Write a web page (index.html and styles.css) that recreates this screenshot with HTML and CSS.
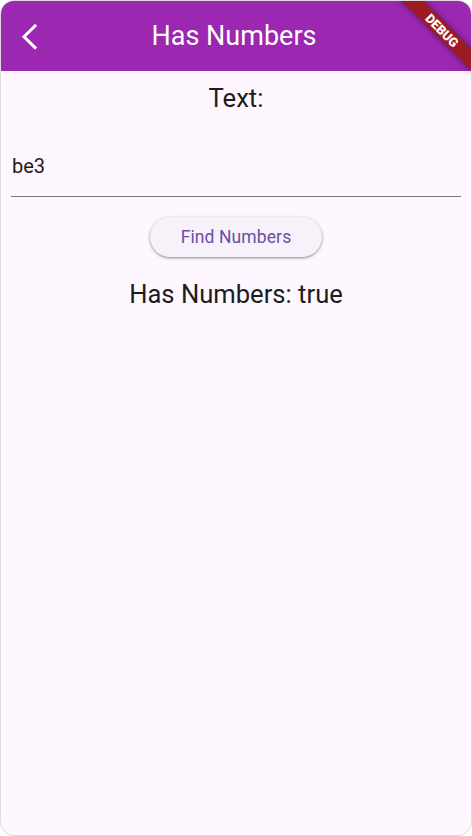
FILE: index.html
```html
<!DOCTYPE html>
<html lang="en">
<head>
<meta charset="utf-8">
<title>Has Numbers</title>
<link rel="stylesheet" href="styles.css">
</head>
<body>
<div class="device">
  <header class="appbar">
    <button class="back" aria-label="Back">
      <svg width="20" height="26" viewBox="0 0 20 26"><polyline points="15,2 4,12.8 15,23.6" fill="none" stroke="#fff" stroke-width="3" stroke-linecap="square" stroke-linejoin="miter"/></svg>
    </button>
    <h1 class="title">Has Numbers</h1>
    <span class="spacer"></span>
  </header>
  <main class="content">
    <div class="label">Text:</div>
    <div class="field"><span class="field-value">be3</span></div>
    <button class="find-btn">Find Numbers</button>
    <div class="result">Has Numbers: true</div>
  </main>
  <div class="debug-banner">DEBUG</div>
</div>
</body>
</html>
```
FILE: styles.css
```css
html, body {
  margin: 0;
  padding: 0;
  background: #ffffff;
}

.device {
  position: relative;
  width: 472px;
  height: 836px;
  box-sizing: border-box;
  border: 1px solid #dcdcdc;
  border-radius: 14px;
  overflow: hidden;
  background: #fef7ff;
  font-family: Roboto, "Noto Sans", sans-serif;
  color: #1d1b20;
  display: flex;
  flex-direction: column;
}

.appbar {
  height: 70px;
  flex: none;
  background: #9c27b0;
  display: grid;
  grid-template-columns: 70px 1fr 70px;
  align-items: center;
}

.back {
  background: none;
  border: none;
  padding: 0 0 0 19px;
  margin: 0;
  height: 70px;
  display: flex;
  align-items: center;
  cursor: pointer;
}

.back svg {
  display: block;
  margin-top: 1px;
}

.title {
  margin: 0;
  font-size: 27px;
  font-weight: 400;
  line-height: 32px;
  color: #ffffff;
  text-align: center;
  margin-top: -1px;
  padding-right: 4px;
}

.content {
  display: flex;
  flex-direction: column;
  align-items: center;
  padding: 13px 10px 0;
}

.label {
  font-size: 25.6px;
  line-height: 29px;
}

.field {
  align-self: stretch;
  margin-top: 42px;
  padding: 0 1px 18px;
  border-bottom: 1px solid #79747e;
  font-size: 20px;
  line-height: 23px;
  color: #1d1b20;
}

.find-btn {
  margin-top: 20px;
  height: 40px;
  padding: 0 31px;
  border: none;
  border-radius: 20px;
  background: #f7f2fa;
  color: #6750a4;
  font-family: Roboto, "Noto Sans", sans-serif;
  font-size: 17.5px;
  font-weight: 400;
  letter-spacing: 0.1px;
  box-shadow: 0 1px 2px rgba(0, 0, 0, 0.3), 0 1px 3px 1px rgba(0, 0, 0, 0.12);
  cursor: pointer;
}

.result {
  margin-top: 23px;
  font-size: 25.6px;
  line-height: 29px;
}

.debug-banner {
  position: absolute;
  left: 391px;
  top: 21.5px;
  width: 100px;
  height: 15px;
  transform: rotate(45deg);
  background: #9e1b24;
  box-shadow: 0 0 6px rgba(0, 0, 0, 0.5);
  color: #ffffff;
  font-family: Roboto, "Noto Sans", sans-serif;
  font-size: 12.75px;
  font-weight: 900;
  line-height: 15px;
  text-align: center;
}
```
